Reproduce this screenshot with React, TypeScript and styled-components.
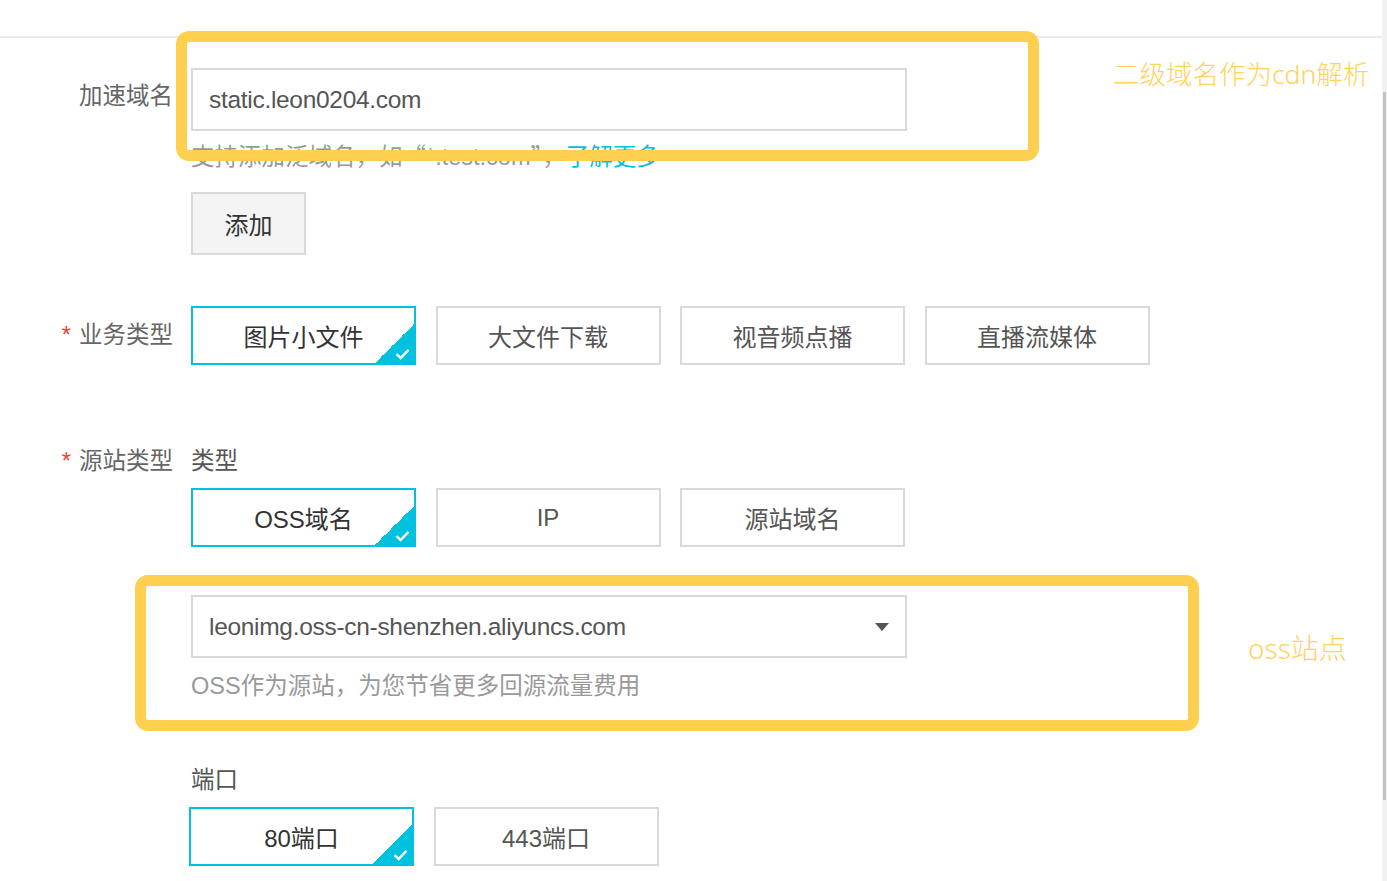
import React from "react";
import styled, { createGlobalStyle } from "styled-components";

const GlobalStyle = createGlobalStyle`
  html, body {
    margin: 0;
    padding: 0;
    background: #fff;
    overflow: hidden;
  }
  body {
    font-family: "Liberation Sans", "Noto Sans CJK SC", sans-serif;
    color: #555;
  }
`;

const Screen = styled.div`
  display: flex;
  width: 1387px;
  height: 881px;
`;

const Page = styled.div`
  position: relative;
  flex: 1;
  overflow: hidden;
`;

const TopBar = styled.div`
  height: 36px;
  border-bottom: 2px solid #ececec;
`;

const Form = styled.div`
  display: flex;
  flex-direction: column;
`;

const Row = styled.div<{ $top: number }>`
  display: flex;
  gap: 18px;
  margin-top: ${(p) => p.$top}px;
`;

const Label = styled.div<{ $pad: number }>`
  width: 173px;
  flex-shrink: 0;
  text-align: right;
  font-size: 23.5px;
  line-height: 32px;
  color: #666;
  padding-top: ${(p) => p.$pad}px;
  font-family: "Noto Sans CJK SC", sans-serif;
`;

const Star = styled.span`
  color: #f04134;
  margin-right: 8px;
  font-family: "Liberation Sans", sans-serif;
`;

const Field = styled.div`
  display: flex;
  flex-direction: column;
  align-items: flex-start;
`;

const TextBox = styled.div<{ $top?: number }>`
  box-sizing: border-box;
  width: 716px;
  height: 63px;
  margin-top: ${(p) => p.$top ?? 0}px;
  border: 2px solid #d9d9d9;
  padding: 0 16px;
  display: flex;
  align-items: center;
  justify-content: space-between;
  font-size: 24.5px;
  color: #555;
  letter-spacing: -0.3px;
`;

const Caret = styled.span`
  width: 0;
  height: 0;
  border-left: 7px solid transparent;
  border-right: 7px solid transparent;
  border-top: 8px solid #555;
`;

const Help = styled.div<{ $top: number }>`
  margin-top: ${(p) => p.$top}px;
  height: 30px;
  font-size: 23.5px;
  line-height: 30px;
  color: #999;
  white-space: nowrap;
  font-family: "Liberation Sans", "Noto Sans CJK SC", sans-serif;
`;

const Quote = styled.span`
  font-family: "Noto Sans CJK SC", sans-serif;
  line-height: 1;
`;

const Link = styled.span`
  color: #00c1de;
`;

const AddButton = styled.div`
  box-sizing: border-box;
  margin-top: 20px;
  width: 115px;
  height: 63px;
  background: #f4f4f4;
  border: 2px solid #d9d9d9;
  display: flex;
  align-items: center;
  justify-content: center;
  font-size: 24px;
  color: #333;
  font-family: "Noto Sans CJK SC", sans-serif;
`;

const SubLabel = styled.div<{ $top?: number }>`
  margin-top: ${(p) => p.$top ?? 0}px;
  font-size: 23.5px;
  line-height: 32px;
  color: #555;
  font-family: "Noto Sans CJK SC", sans-serif;
`;

const Options = styled.div<{ $top?: number; $shift?: number }>`
  display: flex;
  gap: 19.5px;
  margin-top: ${(p) => p.$top ?? 0}px;
  margin-left: ${(p) => p.$shift ?? 0}px;
`;

const Option = styled.div<{ $active?: boolean }>`
  position: relative;
  box-sizing: border-box;
  width: 225px;
  height: 59px;
  border: 2px solid ${(p) => (p.$active ? "#00c1de" : "#d9d9d9")};
  display: flex;
  align-items: center;
  justify-content: center;
  font-size: 24px;
  color: ${(p) => (p.$active ? "#333" : "#555")};
  overflow: hidden;
`;

const Corner = styled.span`
  position: absolute;
  right: -1px;
  bottom: -1px;
  width: 41px;
  height: 41px;
  background: linear-gradient(135deg, transparent 50%, #00c1de 50%);
  display: flex;
  align-items: flex-end;
  justify-content: flex-end;
  padding: 0 5px 4px 0;
  box-sizing: border-box;
`;

const Highlight = styled.div<{ $x: number; $y: number; $w: number; $h: number }>`
  position: absolute;
  left: ${(p) => p.$x}px;
  top: ${(p) => p.$y}px;
  width: ${(p) => p.$w}px;
  height: ${(p) => p.$h}px;
  box-sizing: border-box;
  border: 11px solid #ffcf50;
  border-radius: 13px;
  pointer-events: none;
`;

const Note = styled.div<{ $x: number; $y: number; $size: number }>`
  position: absolute;
  left: ${(p) => p.$x}px;
  top: ${(p) => p.$y}px;
  font-size: ${(p) => p.$size}px;
  line-height: 34px;
  color: #ffd25a;
  white-space: nowrap;
  font-family: "Noto Sans", "Noto Sans CJK SC", sans-serif;
  font-weight: 300;
`;

const Scrollbar = styled.div`
  width: 5px;
  flex-shrink: 0;
  background: #f1f1f1;
  display: flex;
  flex-direction: column;
  align-items: center;
  padding-top: 92px;
  box-sizing: border-box;
`;

const Thumb = styled.div`
  width: 3px;
  height: 708px;
  background: #c2c2c2;
`;

function Check() {
  return (
    <svg width="15" height="12" viewBox="0 0 15 12">
      <path d="M1.5 6.2 L5.6 10 L13.5 1.8" fill="none" stroke="#fff" strokeWidth="2.4" />
    </svg>
  );
}

function Choice({ label, active }: { label: string; active?: boolean }) {
  return (
    <Option $active={active}>
      {label}
      {active && (
        <Corner>
          <Check />
        </Corner>
      )}
    </Option>
  );
}

export default function App() {
  return (
    <>
      <GlobalStyle />
      <Screen>
        <Page>
          <TopBar />
          <Form>
            <Row $top={30}>
              <Label $pad={10}>加速域名</Label>
              <Field>
                <TextBox>static.leon0204.com</TextBox>
                <Help $top={11}>
                  支持添加泛域名，如<Quote>“</Quote>*.test.com<Quote>”</Quote>，
                  <Link>了解更多</Link>
                </Help>
                <AddButton>添加</AddButton>
              </Field>
            </Row>

            <Row $top={51}>
              <Label $pad={11}>
                <Star>*</Star>业务类型
              </Label>
              <Options>
                <Choice label="图片小文件" active />
                <Choice label="大文件下载" />
                <Choice label="视音频点播" />
                <Choice label="直播流媒体" />
              </Options>
            </Row>

            <Row $top={78}>
              <Label $pad={0}>
                <Star>*</Star>源站类型
              </Label>
              <Field>
                <SubLabel>类型</SubLabel>
                <Options $top={13}>
                  <Choice label="OSS域名" active />
                  <Choice label="IP" />
                  <Choice label="源站域名" />
                </Options>
                <TextBox $top={48}>
                  leonimg.oss-cn-shenzhen.aliyuncs.com
                  <Caret />
                </TextBox>
                <Help $top={13}>OSS作为源站，为您节省更多回源流量费用</Help>
                <SubLabel $top={61}>端口</SubLabel>
                <Options $top={13} $shift={-2}>
                  <Choice label="80端口" active />
                  <Choice label="443端口" />
                </Options>
              </Field>
            </Row>
          </Form>

          <Highlight $x={176} $y={31} $w={863} $h={130} />
          <Highlight $x={135} $y={575} $w={1064} $h={156} />
          <Note $x={1113} $y={57} $size={26.5}>二级域名作为cdn解析</Note>
          <Note $x={1248} $y={631} $size={28}>oss站点</Note>
        </Page>
        <Scrollbar>
          <Thumb />
        </Scrollbar>
      </Screen>
    </>
  );
}
